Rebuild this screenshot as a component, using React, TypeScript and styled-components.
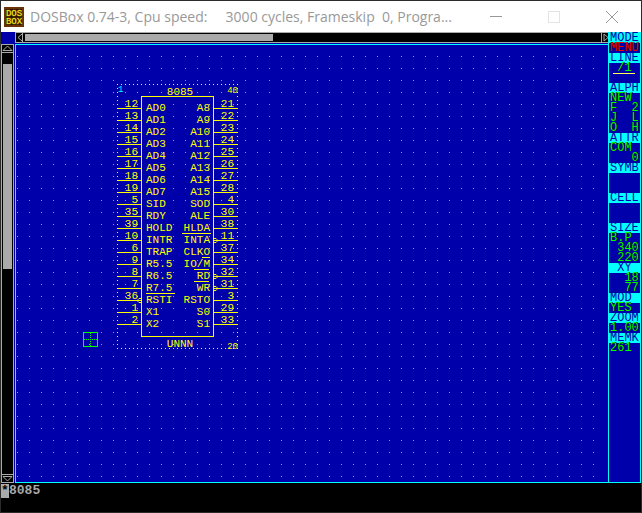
import React from 'react';
import styled, { createGlobalStyle } from 'styled-components';

const Global = createGlobalStyle`
  * { box-sizing: border-box; }
  html, body { margin: 0; background: #000; }
  button, input { font: inherit; padding: 0; border: 0; margin: 0; }
`;

const Window = styled.main`
  display: flex;
  flex-direction: column;
  height: 100vh;
  border: 1px solid #2b2b2b;
  background: #000;
  font-family: 'Liberation Mono', monospace;
`;
const TitleBar = styled.header`
  display: flex;
  flex: none;
  align-items: center;
  height: 31px;
  background: #fff;
  color: #999;
  font-family: 'Open Sans', sans-serif;
`;
const AppIcon = styled.svg`
  flex: none;
  width: 20px;
  height: 20px;
  margin: 0 6px 0 3px;
  font-family: 'Liberation Mono', monospace;
`;
const Title = styled.h1`
  flex: 1;
  min-width: 0;
  margin: 0;
  white-space: pre;
  font-size: 14px;
  line-height: 30px;
  font-weight: 400;
`;
const WindowButton = styled.button`
  display: grid;
  flex: none;
  place-items: center;
  width: 58px;
  height: 30px;
  background: transparent;
  color: #999;
  &:disabled { color: #e4e4e4; }
`;
const Workspace = styled.div`
  display: grid;
  flex: 1;
  min-height: 0;
  grid-template-columns: 14px minmax(0, 1fr) 33px;
  grid-template-rows: 12px minmax(0, 1fr);
  background: #0000aa;
`;
const HorizontalBar = styled.div`
  display: flex;
  grid-column: 2;
  height: 11px;
  border: 1px solid #aaa;
  border-right: 0;
  background: #000;
`;
const VerticalBar = styled.div`
  display: flex;
  flex-direction: column;
  grid-column: 1;
  grid-row: 2;
  width: 13px;
  border: 1px solid #aaa;
  background: #000;
`;
const ArrowButton = styled.button<{ $edge: 'left' | 'right' | 'top' | 'bottom' }>`
  display: grid;
  flex: none;
  place-items: center;
  width: ${p => (p.$edge === 'left' || p.$edge === 'right' ? '7px' : '11px')};
  height: ${p => (p.$edge === 'left' || p.$edge === 'right' ? '9px' : '8px')};
  background: #000;
  border-${p => ({ left: 'right', right: 'left', top: 'bottom', bottom: 'top' })[p.$edge]}: 1px solid #aaa;
`;
const Track = styled.div<{ $vertical?: boolean }>`
  flex: 1;
  min-width: 0;
  min-height: 0;
  padding: ${p => (p.$vertical ? '11px 1px 0' : '1px 0 1px 2px')};
`;
const Thumb = styled.div<{ $vertical?: boolean }>`
  width: ${p => (p.$vertical ? '100%' : '43%')};
  height: ${p => (p.$vertical ? '50%' : '100%')};
  background: #aaa;
`;
const Drawing = styled.section`
  grid-column: 2;
  grid-row: 2;
  min-height: 0;
  border: 1px solid #0ff;
  border-right: 0;
`;
const Canvas = styled.svg`
  display: block;
  width: 100%;
  height: 100%;
  font-family: 'Liberation Mono', monospace;
`;
const SideMenu = styled.nav`
  grid-column: 3;
  grid-row: 1 / 3;
  border: 1px solid #0ff;
  color: #00ff00;
`;
const MenuItem = styled.button<{ $kind?: 'head' | 'active' }>`
  display: flex;
  align-items: flex-start;
  width: 100%;
  height: 10px;
  padding-left: 1px;
  white-space: pre;
  font-size: 12px;
  line-height: 10px;
  background: ${p => (p.$kind === 'head' ? '#0ff' : 'transparent')};
  color: ${p => (p.$kind === 'head' ? '#0000aa' : p.$kind === 'active' ? '#f00' : 'inherit')};
  text-shadow: ${p => (p.$kind === 'head' ? 'none' : '1px 0 #000')};
`;
const LineSample = styled.div`
  height: 10px;
  margin: 0 5px 0 4px;
  border-top: 1px solid #ff5;
`;
const CommandLine = styled.label`
  display: flex;
  flex: none;
  height: 29px;
  padding-top: 1px;
  color: #aaa;
  font-size: 13px;
  line-height: 14px;
  font-weight: 700;
`;
const Prompt = styled.span`
  width: 8px;
  height: 14px;
  background: #aaa;
  color: #000;
`;
const CommandInput = styled.input`
  flex: 1;
  min-width: 0;
  height: 14px;
  background: transparent;
  color: inherit;
  outline: 0;
`;

type Entry = { text: string; kind?: 'head' | 'active'; line?: boolean };
const head = (text: string): Entry => ({ text, kind: 'head' });
const row = (text: string): Entry => ({ text });
const entries: Entry[] = [
  head('MODE'), { text: 'MENU', kind: 'active' }, head('LINE'), row(' /1'), { text: '', line: true },
  head('ALPH'), row('NEW'), row('F  2'), row('J  L'), row('O  H'),
  head('ATTR'), row('COM'), row('   0'), head('SYMB'), row(''), row(''),
  head('CELL'), row(''), row(''), head('SIZE'), row('B.P'), row(' 340'), row(' 220'),
  head(' XY '), row('  18'), row('  77'), head('MOD '), row('YES'), head('ZOOM'), row('1.00'),
  head('MEMK'), row('261'),
];

const pins: [string, string, string, string][] = [
  ['12', 'AD0', 'A8', '21'], ['13', 'AD1', 'A9', '22'], ['14', 'AD2', 'A10', '23'],
  ['15', 'AD3', 'A11', '24'], ['16', 'AD4', 'A12', '25'], ['17', 'AD5', 'A13', '26'],
  ['18', 'AD6', 'A14', '27'], ['19', 'AD7', 'A15', '28'], ['5', 'SID', 'SOD', '4'],
  ['35', 'RDY', 'ALE', '30'], ['39', 'HOLD', 'HLDA', '38'], ['10', 'INTR', 'INTA', '11'],
  ['6', 'TRAP', 'CLKO', '37'], ['9', 'R5.5', 'IO/M', '34'], ['8', 'R6.5', 'RD', '32'],
  ['7', 'R7.5', 'WR', '31'], ['36', 'RSTI', 'RSTO', '3'], ['1', 'X1', 'S0', '29'],
  ['2', 'X2', 'S1', '33'],
];

function Chip() {
  return (
    <g fill="#ff0" fontSize="11">
      <path d="M101 39.500h121M101 303.500h121M101.500 39v265M221.500 39v265" stroke="#ff5" strokeDasharray="1 3" />
      <rect x="125.500" y="51.500" width="72" height="240" fill="none" stroke="#ff0" />
      <text x="164" y="50" textAnchor="middle">8085</text>
      <text x="164" y="302" textAnchor="middle">UNNN</text>
      <text x="102" y="47" fontSize="9" fill="#0ff">1</text>
      <text x="222" y="48" textAnchor="end" fontSize="9">40</text>
      <text x="222" y="304" textAnchor="end" fontSize="9">20</text>
      {pins.map(([ln, l, r, rn], i) => {
        const y = 63 + i * 12;
        return (
          <g key={l}>
            <path d={`M101 ${y}.5h24M198 ${y}.5h24`} stroke="#ff0" />
            <text x="122" y={y - 1} textAnchor="end">{ln}</text>
            <text x="130" y={y + 3}>{l}</text>
            <text x="194" y={y + 3} textAnchor="end">{r}</text>
            <text x="218" y={y - 1} textAnchor="end">{rn}</text>
          </g>
        );
      })}
      <path d="M166 188.500h29M186 212.500h8M178 224.500h15M178 236.500h15M130 248.500h29" stroke="#ff0" />
      <path d="M198 193.500h2l1 1v2l-1 1h-2M198 229.500h2l1 1v2l-1 1h-2M198 241.500h2l1 1v2l-1 1h-2M125 253.500h-2l-1 1v2l1 1h2" fill="none" stroke="#ff0" />
    </g>
  );
}

export default function App() {
  return (
    <>
      <Global />
      <Window>
        <TitleBar>
          <AppIcon viewBox="0 0 20 20" role="img" aria-label="DOSBox">
            <rect width="20" height="20" fill="#6b3208" />
            <rect x="2" y="2" width="16" height="16" fill="#2a1602" />
            <g fill="#ffee22" stroke="#6a5000" strokeWidth="1" paintOrder="stroke" fontSize="9" textAnchor="middle">
              <text x="10" y="9">DOS</text>
              <text x="10" y="17">BOX</text>
            </g>
          </AppIcon>
          <Title>DOSBox 0.74-3, Cpu speed:     3000 cycles, Frameskip  0, Progra...</Title>
          <WindowButton aria-label="Minimize"><svg width="12" height="12"><path d="M0 5.500h12" stroke="currentColor" /></svg></WindowButton>
          <WindowButton aria-label="Maximize" disabled><svg width="12" height="12"><rect x=".5" y=".5" width="11" height="11" fill="none" stroke="currentColor" /></svg></WindowButton>
          <WindowButton aria-label="Close"><svg width="12" height="12"><path d="M0 0l12 12M12 0L0 12" stroke="currentColor" /></svg></WindowButton>
        </TitleBar>
        <Workspace>
          <HorizontalBar>
            <ArrowButton $edge="left" aria-label="Scroll left"><svg width="5" height="9"><path d="M5 1L1 4.500 5 8" fill="none" stroke="#aaa" /></svg></ArrowButton>
            <Track><Thumb /></Track>
            <ArrowButton $edge="right" aria-label="Scroll right"><svg width="5" height="9"><path d="M1 1l4 3.500L1 8z" fill="none" stroke="#aaa" /></svg></ArrowButton>
          </HorizontalBar>
          <VerticalBar>
            <ArrowButton $edge="top" aria-label="Scroll up"><svg width="11" height="7"><path d="M1 5.500h9L5.500 1z" fill="none" stroke="#aaa" /></svg></ArrowButton>
            <Track $vertical><Thumb $vertical /></Track>
            <ArrowButton $edge="bottom" aria-label="Scroll down"><svg width="11" height="7"><path d="M1 1.500h9L5.500 6z" fill="none" stroke="#aaa" /></svg></ArrowButton>
          </VerticalBar>
          <Drawing>
            <Canvas role="img" aria-label="8085 symbol on the drawing grid">
              <defs>
                <pattern id="grid" width="12" height="12" patternUnits="userSpaceOnUse">
                  <rect x="1" y="11" width="1" height="1" fill="#00ff55" />
                </pattern>
              </defs>
              <rect width="98%" height="100%" fill="url(#grid)" />
              <Chip />
              <g fill="none" stroke="#00ff00">
                <rect x="67.500" y="287.500" width="14" height="14" />
                <path d="M68 294.500h14M74.500 288v14" strokeDasharray="1 1" />
              </g>
            </Canvas>
          </Drawing>
          <SideMenu aria-label="Drawing commands">
            {entries.map((e, i) => e.line ? <LineSample key={i} /> : <MenuItem key={i} $kind={e.kind}>{e.text}</MenuItem>)}
          </SideMenu>
        </Workspace>
        <CommandLine>
          <Prompt>*</Prompt>
          <CommandInput aria-label="Command" defaultValue="8085" />
        </CommandLine>
      </Window>
    </>
  );
}
